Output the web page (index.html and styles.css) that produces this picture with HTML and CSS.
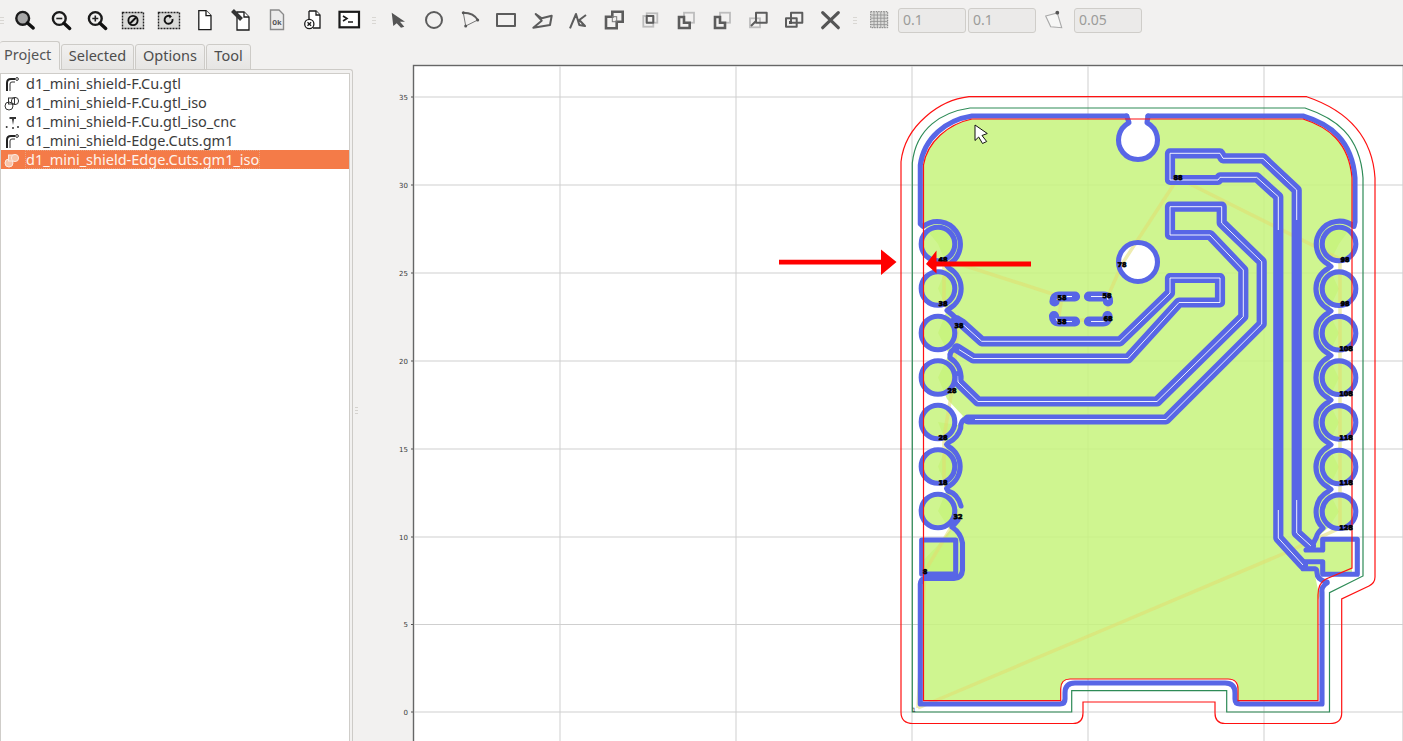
FILE: index.html
```html
<!DOCTYPE html>
<html lang="en">
<head>
<meta charset="utf-8">
<title>FlatCAM</title>
<link rel="stylesheet" href="styles.css">
</head>
<body>
<div class="toolbar">
  <span class="grip grip-first"></span>
  <span class="btn"><svg class="ico" viewBox="0 0 24 24"><circle cx="9.7" cy="10.3" r="6.4" class="lens-fill"/><path d="M14.5 15l5.7 5" class="handle"/></svg></span>
  <span class="btn"><svg class="ico" viewBox="0 0 24 24"><circle cx="10.3" cy="10.5" r="6.4" class="lens"/><path d="M15 15.2l5.7 5.2" class="handle"/><path d="M7.3 10.5h6" class="sign"/></svg></span>
  <span class="btn"><svg class="ico" viewBox="0 0 24 24"><circle cx="10.3" cy="10.5" r="6.4" class="lens"/><path d="M15 15.2l5.7 5.2" class="handle"/><path d="M7.3 10.5h6M10.3 7.5v6" class="sign"/></svg></span>
  <span class="btn"><svg class="ico" viewBox="0 0 24 24"><rect x="1.5" y="4.5" width="21" height="16" class="dotted"/><circle cx="12" cy="12.5" r="4.6" class="thick"/><path d="M9 15.5l6-6" class="thick"/></svg></span>
  <span class="btn"><svg class="ico" viewBox="0 0 24 24"><rect x="1.5" y="4.5" width="21" height="16" class="dotted"/><path d="M15.5 11a4 4 0 1 1-2-2.7" class="thick"/><path d="M12 6.5l3 2-2.5 2z" class="solid"/></svg></span>
  <span class="btn"><svg class="ico" viewBox="0 0 24 24"><path d="M5.8 2.6H13L18 7.6V21.6H5.8Z" class="doc"/><path d="M13 2.6V7.6H18" class="doc"/></svg></span>
  <span class="btn"><svg class="ico" viewBox="0 0 24 24"><path d="M8 4H15L20 9V22H8Z" class="doc"/><path d="M15 4V9H20" class="doc"/><path d="M3.5 2.5l9 9" class="pen"/></svg></span>
  <span class="btn"><svg class="ico" viewBox="0 0 24 24"><path d="M5.5 2H14L18.5 6.5V21.5H5.5Z" class="doc-grey"/><text x="12" y="17" class="ok">Ok</text></svg></span>
  <span class="btn"><svg class="ico" viewBox="0 0 24 24"><path d="M8 3H15L19 7V20H12" class="doc"/><path d="M15 3V7H19" class="doc"/><path d="M8 3V11" class="doc"/><circle cx="8.3" cy="16" r="4.6" class="doc"/><path d="M6.5 14.2l3.6 3.6M10.1 14.2l-3.6 3.6" class="doc"/></svg></span>
  <span class="btn"><svg class="ico" viewBox="0 0 24 24"><rect x="2.5" y="3.8" width="19.5" height="15.5" class="term"/><path d="M6 8l4 2.5L6 13M11 14h5" class="doc-line"/></svg></span>
  <span class="grip"></span>
  <span class="btn"><svg class="ico" viewBox="0 0 24 24"><path d="M5.7 4.7L19 13.7H14L18.3 18.7 15 19.7 10.7 15.3 7.3 18Z" class="g-solid"/></svg></span>
  <span class="btn"><svg class="ico" viewBox="0 0 24 24"><circle cx="12" cy="12" r="8" class="g-line"/></svg></span>
  <span class="btn"><svg class="ico" viewBox="0 0 24 24"><path d="M5.3 4.7Q16 5 19.7 12" class="g-line"/><path d="M5.3 4.7L7.7 18 19.7 12" class="g-thin"/><circle cx="5.3" cy="4.7" r="1.5" class="g-solid"/><circle cx="19.7" cy="12" r="1.5" class="g-solid"/><circle cx="7.7" cy="18" r="1.5" class="g-solid"/></svg></span>
  <span class="btn"><svg class="ico" viewBox="0 0 24 24"><rect x="3" y="6" width="18" height="12" class="g-line"/></svg></span>
  <span class="btn"><svg class="ico" viewBox="0 0 24 24"><path d="M5.7 6L11.7 10.3 21.7 7.7 20 17 3.3 19.7 11.7 12.7Z" class="g-line"/></svg></span>
  <span class="btn"><svg class="ico" viewBox="0 0 24 24"><path d="M4 20.3L10 6 13.3 17 19 18 13.3 12 20 7" class="g-line"/></svg></span>
  <span class="btn"><svg class="ico" viewBox="0 0 24 24"><path d="M10.3 8.7V3.7H20.7V13.7H14.7V20.3H4V8.7Z" class="g-thick"/><rect x="10.3" y="8.7" width="4.4" height="5" class="g-thin"/></svg></span>
  <span class="btn"><svg class="ico" viewBox="0 0 24 24"><rect x="8.7" y="5.3" width="10.6" height="9.4" class="l-line"/><rect x="5.3" y="8" width="10" height="10.7" class="l-line"/><rect x="8.7" y="8" width="6.6" height="6.7" class="g-line"/></svg></span>
  <span class="btn"><svg class="ico" viewBox="0 0 24 24"><rect x="10" y="4.7" width="10" height="10" class="l-line"/><path d="M10 9H5V20H15.7V14.7H10Z" class="g-thick"/></svg></span>
  <span class="btn"><svg class="ico" viewBox="0 0 24 24"><rect x="10" y="4.7" width="10" height="10" class="l-line"/><path d="M10 14.7V9H5V20H15V14.7Z" class="g-thick"/></svg></span>
  <span class="btn"><svg class="ico" viewBox="0 0 24 24"><rect x="4" y="10.3" width="10" height="9" class="l-line"/><rect x="10" y="4.7" width="10.7" height="10" class="g-line"/><path d="M5 18l5-5" class="g-line"/></svg></span>
  <span class="btn"><svg class="ico" viewBox="0 0 24 24"><rect x="4" y="10.3" width="10.7" height="8.4" class="g-line"/><rect x="9" y="4.7" width="11.3" height="10" class="g-line"/><rect x="7" y="13" width="3" height="3" class="g-solid"/></svg></span>
  <span class="btn"><svg class="ico" viewBox="0 0 24 24"><path d="M4.7 4.7L20.3 19.7M20.3 4.7L4.7 19.7" class="g-x"/></svg></span>
  <span class="grip"></span>
  <span class="btn"><svg class="ico" viewBox="0 0 24 24"><rect x="3.7" y="3.7" width="17" height="16" class="gridbox"/><path d="M3.7 7h17M3.7 10.2h17M3.7 13.4h17M3.7 16.6h17M7 3.7v16M10.4 3.7v16M13.8 3.7v16M17.2 3.7v16" class="gridlines"/></svg></span>
  <span class="field">0.1</span>
  <span class="field">0.1</span>
  <span class="btn"><svg class="ico" viewBox="0 0 24 24"><path d="M2.7 8L14.3 5 18.7 19.7 7.7 18.7Z" class="snap"/><circle cx="14.3" cy="4.7" r="1.9" class="g-solid"/></svg></span>
  <span class="field">0.05</span>
</div>
<div class="main">
  <div class="side">
    <div class="tabs">
      <span class="tab tab-active">Project</span>
      <span class="tab tab-selected">Selected</span>
      <span class="tab tab-options">Options</span>
      <span class="tab tab-tool">Tool</span>
    </div>
    <div class="frame">
      <ul class="list">
        <li class="row"><svg class="tree" viewBox="0 0 16 16"><path d="M4 15V7Q4 3 8 3H12" class="t-line"/><path d="M7 15V8Q7 6 9 6H12" class="t-thin"/><circle cx="14" cy="3" r="1.4" class="t-thin"/></svg><span class="row-text">d1_mini_shield-F.Cu.gtl</span></li>
        <li class="row"><svg class="tree" viewBox="0 0 16 16"><circle cx="6" cy="11" r="4" class="t-thin"/><rect x="5.5" y="3" width="6" height="6" class="t-thin"/><circle cx="12" cy="6" r="3.6" class="t-thin"/></svg><span class="row-text">d1_mini_shield-F.Cu.gtl_iso</span></li>
        <li class="row"><svg class="tree" viewBox="0 0 16 16"><path d="M6.5 3H13V5H11L10 11 9 5H6.5Z" class="t-dot"/><circle cx="3.7" cy="13" r="1" class="t-dot"/><circle cx="10" cy="14" r="1" class="t-dot"/><circle cx="15" cy="13" r="1" class="t-dot"/></svg><span class="row-text">d1_mini_shield-F.Cu.gtl_iso_cnc</span></li>
        <li class="row"><svg class="tree" viewBox="0 0 16 16"><path d="M4 15V7Q4 3 8 3H12" class="t-line"/><path d="M7 15V8Q7 6 9 6H12" class="t-thin"/><circle cx="14" cy="3" r="1.4" class="t-thin"/></svg><span class="row-text">d1_mini_shield-Edge.Cuts.gm1</span></li>
        <li class="row row-on"><svg class="tree" viewBox="0 0 16 16"><circle cx="6" cy="11" r="4" class="t-on"/><rect x="5.5" y="3" width="6" height="6" class="t-on"/><circle cx="12" cy="6" r="3.6" class="t-on"/></svg><span class="row-text row-label">d1_mini_shield-Edge.Cuts.gm1_iso</span></li>
      </ul>
    </div>
  </div>
  <div class="splitter"><span class="split-grip"></span></div>
  <div class="plot">
    <svg class="plot-svg" viewBox="358 40 1045 701" width="1045" height="701">
      <defs>
        <clipPath id="board"><rect x="923.5" y="60" width="428.5" height="690"/></clipPath>
      </defs>
      <rect x="413.5" y="65.5" width="990" height="680" class="canvas"/>
      <path d="M560 66V741M736 66V741M912 66V741M1088 66V741M1264 66V741M414 97H1403M414 185H1403M414 273H1403M414 361H1403M414 449H1403M414 537H1403M414 624.5H1403M414 712H1403" class="grid"/>
      <path d="M411 97H413M411 185H413M411 273H413M411 361H413M411 449H413M411 537H413M411 624.5H413M411 712H413" class="tick"/>
      <g class="axis">
        <text x="408" y="99.5">35</text><text x="408" y="187.5">30</text><text x="408" y="275.5">25</text><text x="408" y="363.5">20</text><text x="408" y="451.5">15</text><text x="408" y="539.5">10</text><text x="408" y="627">5</text><text x="408" y="714.5">0</text>
      </g>
      <g clip-path="url(#board)" class="fill">
        <path d="M1128 119H972C948 124 927 142 923.5 165V226L938 244 947 266 938 288.5 947 310 938 333 949 354 938 377.5 947 399 963 416 958 425 938 422 947 445 938 466.5 947 489 938 511 950 530 938 545 923.5 560V700.7H1060.7V692Q1060.7 679 1070 679H1230Q1238 679 1238 687V700.7H1318V600L1322 592 1318 590 1315 575 1322.7 574.3H1352V539.3H1322L1316 538 1328 528 1339 511.7 1328 489.5 1339 467 1328 445 1339 422.5 1328 400 1339 378 1328 356 1339 333 1328 311 1339 288.7 1328 266 1339 244 1352 226V178C1349 142 1328 127 1303 119H1148L1138 140Z"/>
        <circle cx="938" cy="244" r="17"/><circle cx="938" cy="288.5" r="17"/><circle cx="938" cy="333" r="17"/><circle cx="938" cy="377.5" r="17"/><circle cx="938" cy="422" r="17"/><circle cx="938" cy="466.5" r="17"/><circle cx="938" cy="511" r="17"/>
        <rect x="921.7" y="540" width="34" height="34"/>
        <circle cx="1339" cy="244" r="17"/><circle cx="1339" cy="288.7" r="17"/><circle cx="1339" cy="333.2" r="17"/><circle cx="1339" cy="377.7" r="17"/><circle cx="1339" cy="422.4" r="17"/><circle cx="1339" cy="467" r="17"/><circle cx="1339" cy="511.7" r="17"/>
      </g>
      <circle cx="1138" cy="140" r="19.5" class="hole"/>
      <circle cx="1138" cy="262" r="19.5" class="hole"/>
      <path d="M918 708L1122 622 1285 553 1340 528V259L1178 178 1122 264 1108 296V319L1058 321 1062 297 944 259V303L958 325 952 390 944 437V482L958 516 925 571 918 708" class="travel"/>
      <g class="bands">
        <path d="M956 320 961.7 323.3 981.7 341.3H1120L1170 293V278H1220V302.5H1179L1128 358.5H973.3L957 348.3"/>
        <path d="M958 376V382L978 401.5H1157L1243.3 316.7V270L1210 235H1170V206.7H1221.7V223L1261.7 261.7V324L1166 419.5H968"/>
        <path d="M1311 546 1296.7 533V190L1263 158.3H1223L1220 153.3H1170V180H1218L1220 177.3H1256.7L1278.3 196.7V538L1303 565"/>
        <path d="M1059 296.5H1075M1059 296.5Q1054.5 296.5 1054.5 301.5M1089 296.5H1104Q1108 296.5 1108 301.5M1054 316Q1054 321.5 1059 321.5H1075M1089 321.5H1103Q1107.5 321.5 1107.5 316"/>
      </g>
      <g class="hair">
        <path d="M961.7 323.3 981.7 341.3H1120L1170 293V278H1220V302.5H1179L1128 358.5H973.3L957 348.3"/>
        <path d="M958 376V382L978 401.5H1157L1243.3 316.7V270L1210 235H1170V206.7H1221.7V223L1261.7 261.7V324L1166 419.5H975"/>
        <path d="M1311 546 1296.7 533V500M1296.7 220V190L1263 158.3H1223L1220 153.3H1170V180H1218L1220 177.3H1256.7L1278.3 196.7V230M1278.3 510V538L1303 565"/>
        <path d="M1059 296.5H1072Q1057 296.5 1057 300M1091 296.5H1104Q1108 296.5 1108 300M1056 318Q1056 321.5 1059 321.5H1072M1091 321.5H1103Q1107 321.5 1107 318"/>
      </g>
      <g class="pass">
        <path d="M1126.7 116H972C946 120 924 138 920.3 165V224L923 226.5A23 23 0 1 1 949.5 264L947 266 949.5 268.5A23 23 0 0 1 949.5 308.5L947 310.5 949.5 312.5A23 23 0 0 1 958 322"/>
        <path d="M957 348.3Q949 350 950 358A23 23 0 0 1 961 379"/>
        <path d="M966 419Q960.5 420 960.7 428A23 23 0 0 1 948.5 442.5L946.5 444.5 948.5 446.5A23 23 0 0 1 948.5 486.5L946.5 488.5 948 491Q958 494 961 506"/>
        <path d="M958 520 952 527Q961 533 962.5 543V570Q962 578 954 578.5H924Q921 579 920.3 584V704H1060Q1065 704 1065 699V693Q1065 683 1075 683H1225Q1235 683 1235 693V699Q1235 704 1240 704H1322V592Q1321 587 1327 583"/>
        <path d="M1148 116H1303C1330 124 1352 140 1355 178V222L1354 226.5A23 23 0 1 0 1328.5 264.5L1331 266.5 1328.5 268.2A23 23 0 0 0 1328.5 309.2L1331 311 1328.5 312.7A23 23 0 0 0 1328.5 353.7L1331 355.5 1328.5 357.2A23 23 0 0 0 1328.5 398.2L1331 400 1328.5 401.9A23 23 0 0 0 1328.5 442.9L1331 444.7 1328.5 446.5A23 23 0 0 0 1328.5 487.5L1331 489.3 1328.5 491.2A23 23 0 0 0 1323 528Q1317 533 1316.5 537L1313 544"/>
        <path d="M1126.7 116 1129 122.7A19.5 19.5 0 1 0 1147 122.7L1148 116"/>
        <path d="M1306 550H1322.7V539.3H1357.3V574.3H1322.7V561.7H1305"/>
        <path d="M1303 568.7H1315Q1317 569 1317 573 1317 580 1327 582"/>
        <circle cx="938" cy="244" r="16.8"/><circle cx="938" cy="288.5" r="16.8"/><circle cx="938" cy="333" r="16.8"/><circle cx="938" cy="377.5" r="16.8"/><circle cx="938" cy="422" r="16.8"/><circle cx="938" cy="466.5" r="16.8"/><circle cx="938" cy="511" r="16.8"/>
        <path d="M921.7 540H955.7V574H921.7Z"/>
        <circle cx="1339" cy="244" r="16.8"/><circle cx="1339" cy="288.7" r="16.8"/><circle cx="1339" cy="333.2" r="16.8"/><circle cx="1339" cy="377.7" r="16.8"/><circle cx="1339" cy="422.4" r="16.8"/><circle cx="1339" cy="467" r="16.8"/><circle cx="1339" cy="511.7" r="16.8"/>
        <circle cx="1138" cy="262" r="19.5"/>
      </g>
      <path d="M923.5 165C927 142 948 124 972 119H1303C1328 127 1349 142 1352 178V568L1326 579Q1318 583 1318 595V700.7H1238V689Q1238 679 1228 679H1070Q1060.7 679 1060.7 689V700.7H923.5Z" class="edge"/>
      <path d="M912.3 163C916 128 942 112 970 108H1305C1335 118 1360 135 1363 178V576L1329.5 592.7V712H1226.7V690.7H1071.7V712H912.3Z" class="offset"/>
      <path d="M901 161.7C905 125 940 100 969 96.7H1306.7C1340 108 1372 130 1375 178V577Q1375 583 1369 586L1341.7 599V713Q1341.7 723.5 1330 723.5H1225Q1215 723.5 1215 713V702H1083V713Q1083 723.5 1073 723.5H913Q901 723.5 901 712Z" class="edge"/>
      <g class="nums">
        <text x="943" y="262">48</text><text x="943" y="306">38</text><text x="959" y="328">38</text><text x="952" y="393">28</text><text x="943" y="440">28</text><text x="943" y="485">18</text><text x="958" y="519">32</text><text x="925" y="574">8</text>
        <text x="1062" y="300">58</text><text x="1107" y="298">58</text><text x="1062" y="324">58</text><text x="1108" y="321">68</text><text x="1122" y="267">78</text><text x="1178" y="180">88</text>
        <text x="1345" y="262">98</text><text x="1345" y="306">98</text><text x="1346" y="351">108</text><text x="1346" y="396">108</text><text x="1346" y="440">118</text><text x="1346" y="485">118</text><text x="1346" y="530">128</text>
      </g>
      <text x="914" y="712" class="num-one">1</text>
      <path d="M975 125 987.3 133.5 982 135.5 986.7 141.5 982.5 143.5 978.7 137 975 140.5Z" class="cursor"/>
      <path d="M779 259.8H881V249.5L896.5 262 881 275V264.4H779Z" class="mark"/>
      <path d="M1031 261.5V266.5H936.5V273.5L926 264 936.5 250.5V261.5Z" class="mark"/>
    </svg>
  </div>
</div>
</body>
</html>
```
FILE: styles.css
```css
* { box-sizing: border-box; }
html, body { margin: 0; height: 741px; overflow: hidden; }
body { background: #f2f1f0; font-family: "Noto Sans", "Open Sans", sans-serif; display: flex; flex-direction: column; color: #3c3c3c; }

.toolbar { height: 40px; flex: none; display: flex; align-items: center; }
.grip { width: 13px; height: 8px; margin-top: 2px; flex: none; background: repeating-linear-gradient(#d9d7d3 0 1px, transparent 1px 3px) center / 4px 100% no-repeat; }
.grip-first { width: 7px; background-position: left center; }
.btn { width: 36px; height: 40px; flex: none; display: flex; align-items: center; justify-content: center; }
.ico { width: 24px; height: 24px; display: block; }
.field { width: 68px; height: 25px; margin: 0 1px; padding-left: 4px; flex: none; border: 1px solid #cfcdc9; border-radius: 3px; background: #ebeae9; color: #9c9c9a; font-size: 14px; line-height: 22px; }

.lens, .lens-fill, .doc, .doc-line, .term { fill: none; stroke: #1b1b1b; }
.lens, .lens-fill { stroke-width: 2.4; }
.lens-fill { fill: #a8a8a8; }
.handle { stroke: #111; stroke-width: 3.4; fill: none; stroke-linecap: round; }
.sign { stroke: #222; stroke-width: 1.6; fill: none; }
.dotted { fill: #dadad8; stroke: #222; stroke-width: 1.4; stroke-dasharray: 2 1; }
.thick { fill: none; stroke: #111; stroke-width: 1.9; }
.solid { fill: #111; }
.doc { fill: #fff; stroke-width: 1.3; }
.doc-line { stroke-width: 1.6; }
.pen { stroke: #333; stroke-width: 4; fill: none; }
.doc-grey { fill: #ececec; stroke: #8a8a8a; stroke-width: 1.4; }
.ok { font-family: "Liberation Mono", monospace; font-size: 8px; font-weight: 700; fill: #555; text-anchor: middle; }
.term { fill: #fff; stroke-width: 2.2; }
.g-solid { fill: #555; }
.g-line { fill: none; stroke: #5c5c5c; stroke-width: 2; stroke-linejoin: round; }
.g-thin { fill: none; stroke: #777; stroke-width: 1; }
.g-thick { fill: none; stroke: #5c5c5c; stroke-width: 2.6; }
.l-line { fill: none; stroke: #bdbdbd; stroke-width: 1.8; }
.g-x { fill: none; stroke: #555; stroke-width: 3.2; stroke-linecap: round; }
.gridbox { fill: #dcdcda; stroke: #7a7a7a; stroke-width: 1; stroke-dasharray: 1.5 1; }
.gridlines { stroke: #8f8f8f; stroke-width: .8; fill: none; }
.snap { fill: #f7f7f6; stroke: #a9a9a9; stroke-width: 1.1; }

.main { flex: 1; display: flex; min-height: 0; }
.side { width: 353px; flex: none; display: flex; flex-direction: column; }
.tabs { height: 30px; flex: none; display: flex; align-items: flex-end; position: relative; z-index: 1; margin-bottom: -1px; }
.tab { height: 26px; margin-right: 1px; font-size: 14.5px; line-height: 20px; text-align: center; border: 1px solid #cdcbc7; border-radius: 3px 3px 0 0; background: linear-gradient(#f1f0ef, #e6e5e3); color: #4d4d4d; }
.tab-active { width: 60px; height: 29px; border-left: 0; line-height: 24px; text-align: left; padding-left: 4px; background: #f2f1f0; border-bottom-color: #f2f1f0; color: #555; }
.tab-selected { width: 73px; }
.tab-options { width: 70px; }
.tab-tool { width: 45px; }
.frame { flex: 1; min-height: 0; padding: 3px 2px 0 0; border: 1px solid #cdcbc7; border-left: 0; border-bottom: 0; border-radius: 0 3px 0 0; }
.list { height: 100%; margin: 0; padding: 0; list-style: none; background: #fff; border: 1px solid #cfcdc9; border-bottom: 0; }
.row { height: 19px; display: flex; align-items: center; gap: 7px; padding-left: 2px; font-size: 14.5px; color: #3c3c3c; white-space: nowrap; }
.row-text { line-height: 17px; }
.row-on { background: #f47b48; color: #fdf3ec; }
.row-label { outline: 1px dotted #e9a27f; }
.tree { width: 16px; height: 16px; flex: none; }
.t-line { fill: none; stroke: #222; stroke-width: 2; }
.t-thin { fill: none; stroke: #333; stroke-width: 1; }
.t-dot { fill: #333; }
.t-on { fill: #f8c3a8; stroke: #fbe9df; stroke-width: 1; }

.splitter { width: 5px; flex: none; display: flex; align-items: center; }
.split-grip { width: 4px; height: 7px; margin: 40px 0 0 2px; background: repeating-linear-gradient(#d4d2ce 0 1px, transparent 1px 3px); }
.plot { flex: 1; min-width: 0; overflow: hidden; }
.plot-svg { display: block; }

.canvas { fill: #fff; stroke: #666; stroke-width: 1.4; }
.grid { stroke: #cfcfcf; stroke-width: 1; fill: none; }
.tick { stroke: #555; stroke-width: 1; fill: none; }
.axis text { font-family: "DejaVu Sans", sans-serif; font-size: 7px; fill: #3a3a3a; text-anchor: end; }
.fill { fill: #c7f37d; fill-opacity: .85; }
.hole { fill: #fff; }
.travel { fill: none; stroke: #e2dc70; stroke-opacity: .55; stroke-width: 3.5; }
.bands { fill: none; stroke: #5866e6; stroke-width: 10.2; stroke-linejoin: round; stroke-linecap: round; }
.hair { fill: none; stroke: #fff; stroke-width: .9; }
.pass { fill: none; stroke: #5866e6; stroke-width: 5.1; stroke-linejoin: round; stroke-linecap: round; }
.edge { fill: none; stroke: #f11; stroke-width: 1.2; }
.offset { fill: none; stroke: #2e8b57; stroke-width: 1.2; }
.nums text { font-family: "DejaVu Sans", sans-serif; font-size: 6.5px; font-weight: 700; fill: #000; stroke: #000; stroke-width: .7; text-anchor: middle; }
.num-one { font-family: "DejaVu Sans", sans-serif; font-size: 6px; fill: #333; text-anchor: middle; }
.cursor { fill: #fff; stroke: #111; stroke-width: 1; }
.mark { fill: #f00; }
```
